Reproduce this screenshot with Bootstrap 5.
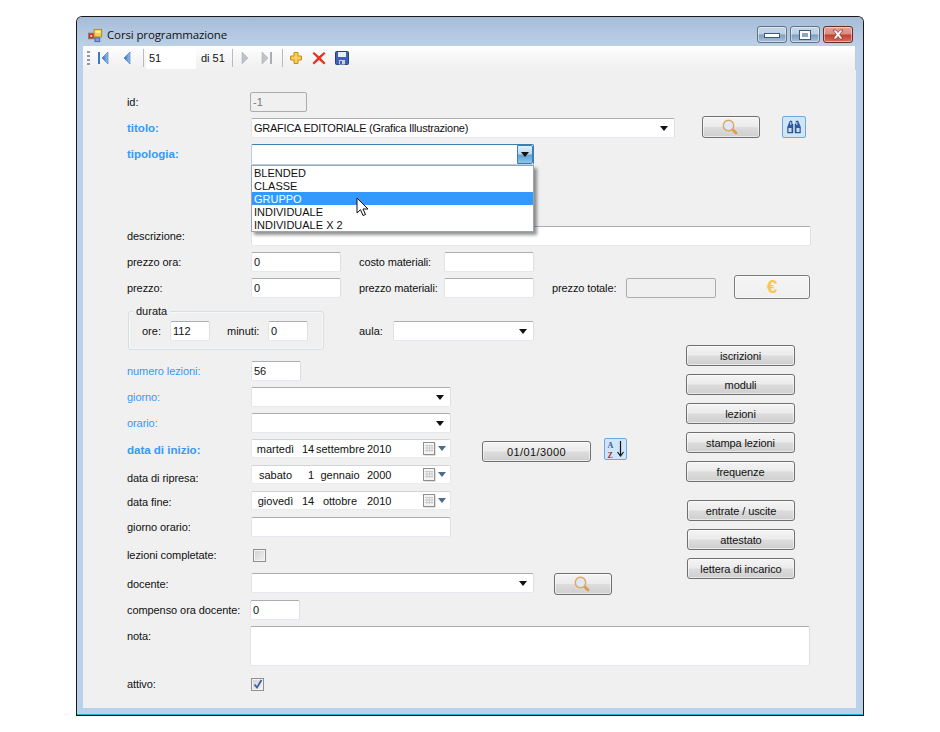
<!DOCTYPE html>
<html lang="it">
<head>
<meta charset="utf-8">
<title>Corsi programmazione</title>
<link href="https://cdn.jsdelivr.net/npm/bootstrap@5.3.0/dist/css/bootstrap.min.css" rel="stylesheet">
<style>
html,body{background:#fff;margin:0;font-family:"Liberation Sans",Arial,sans-serif;font-size:11px;color:#111;line-height:14px}
.wf-win{width:788px;height:700px;margin:16px 0 0 76px;border:1px solid #1a1a1a;border-bottom:1px solid #111;border-radius:6px 6px 0 0;background:#b9d1ea;box-shadow:inset 0 -1px 0 #19b6cf;padding:0 7px 7px 6px}
.wf-title{height:29px;margin:0 -7px 0 -6px;padding:7px 10px 0 11px;background:linear-gradient(#a6bcd7 0,#b4c9e1 60%,#bcd0e6 100%);border-radius:5px 5px 0 0;font-family:"Open Sans",sans-serif;font-size:11.5px;letter-spacing:-.13px;color:#111}
.wf-appico{margin-right:4px;flex:none}
.wf-ctls{margin-top:2px}
.wf-ctl{width:30px;height:17px;margin-left:3px;border:1px solid #5f7386;border-radius:3px;background:linear-gradient(#c6d6e8 0,#bcd0e4 48%,#7f9cbc 52%,#a7c2dc 100%);box-shadow:inset 0 0 0 1px rgba(255,255,255,.45)}
.wf-close{background:linear-gradient(#e6a097 0,#dd8b80 48%,#bf3f2f 52%,#d4705f 100%);border-color:#6a2b25}
.wf-client{height:662px;background:#f0f0f0;width:773px}
.wf-tool{height:24px;padding-left:4px;background:linear-gradient(#fff 0,#f6f6f6 50%,#f0f0f0 100%);border-right:1px solid #c9c9c9}
.wf-grip{width:3px;height:14px;margin-right:5px;background:repeating-linear-gradient(#8f9aa5 0 2px,transparent 2px 4px);flex:none}
.wf-sep{width:1px;height:18px;background:#b8bcc0;flex:none}
.wf-ti{width:16px;height:16px;flex:none}
.m2{margin-left:2px}.m5{margin-left:5px}.m7{margin-left:7px}.m8{margin-left:8px}.m4{margin-left:4px}
.wf-pageno{width:50px;height:22px;border:0;background:#fff;padding:0 3px;font:inherit;color:#111;outline:0;flex:none}
.wf-di{width:23px;flex:none;white-space:nowrap}
.wf-body{padding:22px 0 0 44px}
.wf-row{height:20px;margin-bottom:6px}
.wf-lb{width:124px;flex:none;white-space:nowrap;letter-spacing:-.08px}
.wf-b{font-weight:700;color:#3399ff;font-size:11.5px;letter-spacing:0}
.wf-bl{color:#3399ff}
.wf-in.form-control{height:20px;padding:0 2px;font:inherit;color:#111;border:1px solid;border-color:#abadb3 #dbdfe6 #e3e9ef #e2e3ea;border-radius:2px;background:#fff;box-shadow:none;flex:none}
.wf-in.form-control:disabled{background:#f0f0f0;border-color:#adadad;color:#777}
.wf-in.wf-ta.form-control{height:40px;min-height:40px;resize:none}
.wf-combo{height:20px;padding:0 2px;border:1px solid;border-color:#abadb3 #dbdfe6 #e3e9ef #e2e3ea;border-radius:2px;background:#fff;flex:none;position:relative}
.wf-tight{letter-spacing:-.24px}
.wf-arrow{margin-left:auto;margin-right:4px;width:0;height:0;border:4px solid transparent;border-top:5px solid #111;border-bottom:0;flex:none}
.w57{width:57px}.w90{width:90px}.w50{width:50px}.w40{width:40px}.w200{width:200px}.w283{width:283px}.w424{width:424px}.w560{width:560px}.w141{width:141px}
.wf-btn.btn{padding:0;height:21px;border:1px solid #707070;border-radius:3px;font:inherit;color:#111;background:linear-gradient(#f4f4f4 0,#ebebeb 48%,#dcdcdc 52%,#cfcfcf 100%);box-shadow:inset 0 0 0 1px rgba(255,255,255,.55);flex:none;display:flex;align-items:center;justify-content:center}
.wf-srch.btn{width:58px;height:22px}
.wf-srch svg{margin-left:-2px}
.wf-flat{width:24px;height:22px;border:1px solid #6fa9dc;border-radius:2px;background:#cfe5f8;flex:none;display:flex;align-items:center;justify-content:center}
.ml-27{margin-left:27px}.ml-22{margin-left:22px}.ml-18{margin-left:18px}.ml-20{margin-left:20px}.up-2{margin-top:-2px}
.wf-s2{width:85px;flex:none;white-space:nowrap;letter-spacing:-.12px}.wf-s3{width:74px;flex:none;white-space:nowrap;letter-spacing:-.12px}
.wf-gap{height:56px}.wf-gap7{height:7px}
.wf-focus{height:21px;border-color:#3c7fb1 #3c7fb1 #b5cfe7 #b5cfe7}
.wf-fbtn{margin-left:auto;width:16px;height:19px;margin-right:-2px;border:1px solid #3c7fb1;border-radius:0 2px 2px 0;background:linear-gradient(#e3f1fb 0,#b7d8f0 45%,#5fa3d6 55%,#8fc3e8 100%);display:flex;align-items:center;justify-content:center;flex:none}
.wf-fbtn i{width:0;height:0;border:4px solid transparent;border-top:5px solid #111;border-bottom:0}
.wf-dd{position:absolute;left:-1px;top:20px;width:283px;height:67px;background:#fff;border:1px solid #9aa5b0;box-shadow:3px 3px 3px rgba(60,60,60,.55);z-index:5;font-size:11px;line-height:15px}
.wf-dd div{height:13px;padding-left:2px}
.wf-dd .wf-sel{background:#3399ff;color:#fff}
.wf-cur{position:absolute;left:104px;top:52px;z-index:6}
.wf-mid{height:315px}
.wf-left{width:559px;flex:none}
.wf-group{width:196px;height:39px;border:1px solid #d5dfe5;border-radius:3px;position:relative;margin-left:1px;padding-left:13px;box-shadow:inset 0 0 0 1px rgba(255,255,255,.5);flex:none}
.wf-legend{position:absolute;left:4px;top:-7px;background:#f0f0f0;padding:0 3px;line-height:13px}
.wf-orel{width:28px;flex:none}.wf-minl{padding-left:17px;flex:none;width:58px}
.wf-gr-wrap{height:50px}
.wf-aula{margin:10px 0 0 35px}
.wf-aulal{width:34px;flex:none}
.wf-date{height:19px;width:200px;padding:0 4px 0 3px;border:1px solid;border-color:#d0d3d8 #e4e6ea #e8ebef #e4e6ea;border-radius:2px;background:#fff;flex:none}
.wf-d1{width:41px;text-align:center;flex:none}
.wf-d2{width:12px;text-align:right;margin-left:6px;flex:none}
.wf-d3{width:48px;text-align:center;margin-left:2px;flex:none}
.wf-d4{margin-left:3px;flex:none}
.wf-dbtn{margin-left:auto;display:flex;align-items:center;gap:2px}
.wf-drop{width:0;height:0;border:4px solid transparent;border-top:5px solid #4f6b8c;border-bottom:0}
.wf-low3{padding-top:3px}
.wf-low4{padding-top:4px}
.wf-low6{padding-top:6px}
.wf-low1{padding-top:2px}
.wf-cb{width:13px;height:13px;border:1px solid #8e8f8f;background:linear-gradient(135deg,#cfcfcf,#f4f4f4);box-shadow:inset 0 0 0 1px #f4f4f4;flex:none;display:flex;align-items:center;justify-content:center}
.wf-cb2{margin-left:2px}
.wf-date-btn.btn{width:109px;margin:2px 0 0 31px;align-self:flex-start;letter-spacing:.4px}
.wf-az{margin:-1px 0 0 13px;align-self:flex-start;width:23px;height:22px}
.wf-right{width:110px;padding-top:34px;gap:8px}
.wf-right .wf-btn.btn{width:109px;letter-spacing:-.1px}
.wf-right .wf-gp{margin-top:10px}
.wf-right .wf-nudge.btn{width:108px;margin-left:1px}
.wf-cbrow{margin-top:8px;margin-bottom:8px}
.wf-docr{margin-bottom:7px}
.wf-nota{margin-bottom:8px;height:40px;align-items:flex-start}
.wf-nota .wf-lb{padding-top:3px}
.ml-1px{margin-left:-1px}
.wf-euro.btn{width:76px;height:24px;margin:-3px 0 0 18px;align-self:flex-start;background:linear-gradient(#f5f5f5,#efefef);color:#f7c655;font-size:19px;font-weight:700;border-color:#7c7c7c;opacity:1}
</style>
</head>
<body>
<div class="wf-win">
  <div class="wf-title d-flex align-items-center">
    <svg width="15" height="15" viewBox="0 0 16 16" class="wf-appico"><rect x="0.5" y="5.5" width="6" height="6" fill="#d32f1f" stroke="#7f7f7f"/><rect x="2.5" y="7.500" width="2" height="2" fill="#f7d7d0"/><rect x="6.5" y="1.500" width="8" height="8" fill="#f6cd4e" stroke="#b08a2a"/><rect x="8" y="3" width="5" height="2" fill="#fff3bd"/><rect x="7.500" y="10.500" width="5" height="4" fill="#7f9fd8" stroke="#49639c"/></svg>
    <span>Corsi programmazione</span>
    <div class="d-flex ms-auto align-self-start wf-ctls">
      <div class="wf-ctl d-flex align-items-center justify-content-center"><svg width="16" height="7" viewBox="0 0 16 7"><rect x="0.5" y="2.5" width="15" height="4" fill="#fff" stroke="#3d5a78"/></svg></div>
      <div class="wf-ctl d-flex align-items-center justify-content-center"><svg width="12" height="10" viewBox="0 0 12 10"><rect x="0.5" y="0.5" width="11" height="9" fill="#fff" stroke="#3d5a78"/><rect x="3" y="3" width="6" height="4" fill="#8aa6c2"/></svg></div>
      <div class="wf-ctl wf-close d-flex align-items-center justify-content-center"><svg width="14" height="11" viewBox="0 0 14 11"><path d="M2 1h3l2 2.5L9 1h3L8.700 5.500 12 10H9L7 7.500 5 10H2l3.300-4.500z" fill="#fff" stroke="#7e3028" stroke-width=".7"/></svg></div>
    </div>
  </div>
  <div class="wf-client">
    <div class="wf-tool d-flex align-items-center">
      <div class="wf-grip"></div>
      <svg class="wf-ti" viewBox="0 0 16 16"><defs><linearGradient id="blu" x1="0" x2="1" y1="0" y2="0"><stop offset="0" stop-color="#2f66c4"/><stop offset="1" stop-color="#9cc3ee"/></linearGradient></defs><rect x="3" y="2" width="2" height="12" fill="#3a78cf"/><path d="M13 2v12L7 8z" fill="url(#blu)" stroke="#2a5cae" stroke-width=".5"/></svg>
      <svg class="wf-ti m8" viewBox="0 0 16 16"><path d="M11 2v12L5 8z" fill="url(#blu)" stroke="#2a5cae" stroke-width=".5"/></svg>
      <div class="wf-sep m8"></div>
      <input class="wf-pageno m2" value="51" aria-label="posizione">
      <span class="wf-di m5">di 51</span>
      <div class="wf-sep m8"></div>
      <svg class="wf-ti m4" viewBox="0 0 16 16"><path d="M5 2v12l6-6z" fill="#bfc4c8" stroke="#a5aaae" stroke-width=".5"/></svg>
      <svg class="wf-ti ms-2" viewBox="0 0 16 16"><path d="M3 2v12l6-6z" fill="#bfc4c8" stroke="#a5aaae" stroke-width=".5"/><rect x="11" y="2" width="2" height="12" fill="#a8aeb3"/></svg>
      <div class="wf-sep m7"></div>
      <svg class="wf-ti m5" viewBox="0 0 16 16"><path d="M6 2.500h4v3.500h3.500v4H10v3.500H6V10H2.500V6H6z" fill="#f7cf57" stroke="#c98a1b"/></svg>
      <svg class="wf-ti m7" viewBox="0 0 16 16"><path d="M3 2l5 4.300L13 2l1.500 1.500L9.700 8l4.800 5L13 14.500 8 10l-5 4.500L1.500 13l4.800-5L1.500 3.500z" fill="#e8331f"/></svg>
      <svg class="wf-ti m7" viewBox="0 0 16 16"><rect x="1.500" y="1.500" width="13" height="13" rx="1" fill="#3f62b5" stroke="#233f86"/><rect x="4" y="2" width="8" height="5" fill="#e8eefb"/><rect x="5" y="10" width="6" height="4.500" fill="#c9cfd8"/><rect x="6" y="11" width="2" height="3" fill="#3f62b5"/></svg>
    </div>
    <div class="wf-body">
      <div class="wf-row d-flex align-items-center">
        <div class="wf-lb">id:</div>
        <input class="form-control wf-in w57 ml-1px" value="-1" disabled aria-label="id">
      </div>
      <div class="wf-row d-flex align-items-center">
        <div class="wf-lb wf-b">titolo:</div>
        <div class="wf-combo w424 d-flex align-items-center"><span class="wf-tight">GRAFICA EDITORIALE (Grafica Illustrazione)</span><i class="wf-arrow"></i></div>
        <button class="btn wf-btn wf-srch ml-27 up-2 align-self-start" aria-label="cerca"><svg width="16" height="16" viewBox="0 0 16 16"><line x1="10" y1="10" x2="14" y2="14" stroke="#dd9c4f" stroke-width="2.800" stroke-linecap="round"/><circle cx="6.500" cy="6.500" r="5.200" fill="#dfe8f3" stroke="#e0a760" stroke-width="1.400"/></svg></button>
        <div class="wf-flat ml-22 up-2 align-self-start"><svg width="14" height="14" viewBox="0 0 14 14"><path d="M3 1h2v3h1v9H0.500V7zM9 1h2l2.500 6v6H8V4h1z" fill="#2f5c9e" stroke="#1c3e72" stroke-width=".4"/><rect x="1.500" y="8" width="3" height="4" fill="#cfe0f4"/><rect x="9.500" y="8" width="3" height="4" fill="#cfe0f4"/><rect x="3.300" y="2" width="1" height="3" fill="#cfe0f4"/><rect x="9.300" y="2" width="1" height="3" fill="#cfe0f4"/></svg></div>
      </div>
      <div class="wf-row d-flex align-items-start position-relative">
        <div class="wf-lb wf-b wf-low3">tipologia:</div>
        <div class="wf-combo wf-focus w283 d-flex align-items-center">
          <div class="wf-fbtn"><i></i></div>
          <div class="wf-dd">
            <div>BLENDED</div><div>CLASSE</div><div class="wf-sel">GRUPPO</div><div>INDIVIDUALE</div><div>INDIVIDUALE X 2</div>
          </div>
          <svg class="wf-cur" width="14" height="20" viewBox="0 0 14 20"><path d="M1 1v15l3.500-3.300L7 18.500l2.500-1L7 12h5z" fill="#fff" stroke="#111"/></svg>
        </div>
      </div>
      <div class="wf-gap"></div>
      <div class="wf-row d-flex align-items-center">
        <div class="wf-lb">descrizione:</div>
        <input class="form-control wf-in w560" aria-label="descrizione">
      </div>
      <div class="wf-row d-flex align-items-center">
        <div class="wf-lb">prezzo ora:</div>
        <input class="form-control wf-in w90" value="0" aria-label="prezzo ora">
        <div class="wf-s2 ml-18">costo materiali:</div>
        <input class="form-control wf-in w90" aria-label="costo materiali">
      </div>
      <div class="wf-row d-flex align-items-center">
        <div class="wf-lb">prezzo:</div>
        <input class="form-control wf-in w90" value="0" aria-label="prezzo">
        <div class="wf-s2 ml-18">prezzo materiali:</div>
        <input class="form-control wf-in w90" aria-label="prezzo materiali">
        <div class="wf-s3 ml-18">prezzo totale:</div>
        <input class="form-control wf-in w90" disabled aria-label="prezzo totale">
        <button class="btn wf-btn wf-euro" disabled aria-label="euro">€</button>
      </div>
      <div class="wf-gap7"></div>
      <div class="d-flex wf-mid">
        <div class="wf-left">
          <div class="d-flex align-items-start wf-gr-wrap">
            <div class="wf-group d-flex align-items-center">
              <span class="wf-legend">durata</span>
              <div class="wf-orel">ore:</div>
              <input class="form-control wf-in w40" value="112" aria-label="ore">
              <div class="wf-minl">minuti:</div>
              <input class="form-control wf-in w40" value="0" aria-label="minuti">
            </div>
            <div class="wf-aula d-flex align-items-center">
              <div class="wf-aulal">aula:</div>
              <div class="wf-combo w141 d-flex align-items-center"><i class="wf-arrow"></i></div>
            </div>
          </div>
          <div class="wf-row d-flex align-items-center">
            <div class="wf-lb wf-bl">numero lezioni:</div>
            <input class="form-control wf-in w50" value="56" aria-label="numero lezioni">
          </div>
          <div class="wf-row d-flex align-items-center">
            <div class="wf-lb wf-bl">giorno:</div>
            <div class="wf-combo w200 d-flex align-items-center"><i class="wf-arrow"></i></div>
          </div>
          <div class="wf-row d-flex align-items-center">
            <div class="wf-lb wf-bl">orario:</div>
            <div class="wf-combo w200 d-flex align-items-center"><i class="wf-arrow"></i></div>
          </div>
          <div class="wf-row d-flex align-items-start">
            <div class="wf-lb wf-b wf-low4">data di inizio:</div>
            <div class="wf-date d-flex align-items-center"><span class="wf-d1">martedì</span><span class="wf-d2">14</span><span class="wf-d3">settembre</span><span class="wf-d4">2010</span><span class="wf-dbtn"><svg width="13" height="14" viewBox="0 0 13 14"><rect x="1.500" y="1.500" width="11" height="12" fill="#bdbdbd"/><rect x="0.500" y="0.500" width="11" height="12" fill="#f4f4f4" stroke="#8f8f8f"/><path d="M2 3.500h8M2 6h8M2 8.500h8M4 3v7M6.500 3v7M9 3v7" stroke="#c4c4c4" stroke-width=".8"/></svg><i class="wf-drop"></i></span></div>
            <button class="btn wf-btn wf-date-btn">01/01/3000</button>
            <div class="wf-flat wf-az"><svg width="20" height="18" viewBox="0 0 20 18"><text x="1.500" y="8" font-family="Liberation Serif" font-weight="700" font-size="8" fill="#2f5c9e">A</text><text x="1.500" y="17.500" font-family="Liberation Serif" font-weight="700" font-size="8" fill="#a8322a">Z</text><path d="M14.500 1v14M11.500 12l3 4 3-4" fill="none" stroke="#111" stroke-width="1.200"/></svg></div>
          </div>
          <div class="wf-row d-flex align-items-start">
            <div class="wf-lb wf-low6">data di ripresa:</div>
            <div class="wf-date d-flex align-items-center"><span class="wf-d1">sabato</span><span class="wf-d2">1</span><span class="wf-d3">gennaio</span><span class="wf-d4">2000</span><span class="wf-dbtn"><svg width="13" height="14" viewBox="0 0 13 14"><rect x="1.500" y="1.500" width="11" height="12" fill="#bdbdbd"/><rect x="0.500" y="0.500" width="11" height="12" fill="#f4f4f4" stroke="#8f8f8f"/><path d="M2 3.500h8M2 6h8M2 8.500h8M4 3v7M6.500 3v7M9 3v7" stroke="#c4c4c4" stroke-width=".8"/></svg><i class="wf-drop"></i></span></div>
          </div>
          <div class="wf-row d-flex align-items-start">
            <div class="wf-lb wf-low4">data fine:</div>
            <div class="wf-date d-flex align-items-center"><span class="wf-d1">giovedì</span><span class="wf-d2">14</span><span class="wf-d3">ottobre</span><span class="wf-d4">2010</span><span class="wf-dbtn"><svg width="13" height="14" viewBox="0 0 13 14"><rect x="1.500" y="1.500" width="11" height="12" fill="#bdbdbd"/><rect x="0.500" y="0.500" width="11" height="12" fill="#f4f4f4" stroke="#8f8f8f"/><path d="M2 3.500h8M2 6h8M2 8.500h8M4 3v7M6.500 3v7M9 3v7" stroke="#c4c4c4" stroke-width=".8"/></svg><i class="wf-drop"></i></span></div>
          </div>
          <div class="wf-row d-flex align-items-center">
            <div class="wf-lb">giorno orario:</div>
            <input class="form-control wf-in w200" aria-label="giorno orario">
          </div>
          <div class="wf-row d-flex align-items-center wf-cbrow">
            <div class="wf-lb">lezioni completate:</div>
            <div class="wf-cb wf-cb2"></div>
          </div>
          <div class="wf-row wf-docr d-flex align-items-center">
            <div class="wf-lb wf-low1">docente:</div>
            <div class="wf-combo w283 d-flex align-items-center"><i class="wf-arrow"></i></div>
            <button class="btn wf-btn wf-srch ml-20 align-self-start" aria-label="cerca docente"><svg width="16" height="16" viewBox="0 0 16 16"><line x1="10" y1="10" x2="14" y2="14" stroke="#dd9c4f" stroke-width="2.800" stroke-linecap="round"/><circle cx="6.500" cy="6.500" r="5.200" fill="#dfe8f3" stroke="#e0a760" stroke-width="1.400"/></svg></button>
          </div>
          <div class="wf-row d-flex align-items-center">
            <div class="wf-lb">compenso ora docente:</div>
            <input class="form-control wf-in w50 ml-1px" value="0" aria-label="compenso ora docente">
          </div>
        </div>
        <div class="wf-right d-flex flex-column">
          <button class="btn wf-btn">iscrizioni</button>
          <button class="btn wf-btn">moduli</button>
          <button class="btn wf-btn">lezioni</button>
          <button class="btn wf-btn">stampa lezioni</button>
          <button class="btn wf-btn">frequenze</button>
          <button class="btn wf-btn wf-nudge wf-gp">entrate / uscite</button>
          <button class="btn wf-btn wf-nudge">attestato</button>
          <button class="btn wf-btn wf-nudge">lettera di incarico</button>
        </div>
      </div>
      <div class="d-flex wf-nota">
        <div class="wf-lb">nota:</div>
        <textarea class="form-control wf-in w560 wf-ta ml-1px" aria-label="nota"></textarea>
      </div>
      <div class="wf-row d-flex align-items-center">
        <div class="wf-lb">attivo:</div>
        <div class="wf-cb"><svg width="10" height="10" viewBox="0 0 10 10"><path d="M1.500 5.500l2.500 3L8.500 1" fill="none" stroke="#3b62a8" stroke-width="1.800"/></svg></div>
      </div>
    </div>
  </div>
</div>
<script src="https://cdn.jsdelivr.net/npm/bootstrap@5.3.0/dist/js/bootstrap.bundle.min.js"></script>
</body>
</html>
